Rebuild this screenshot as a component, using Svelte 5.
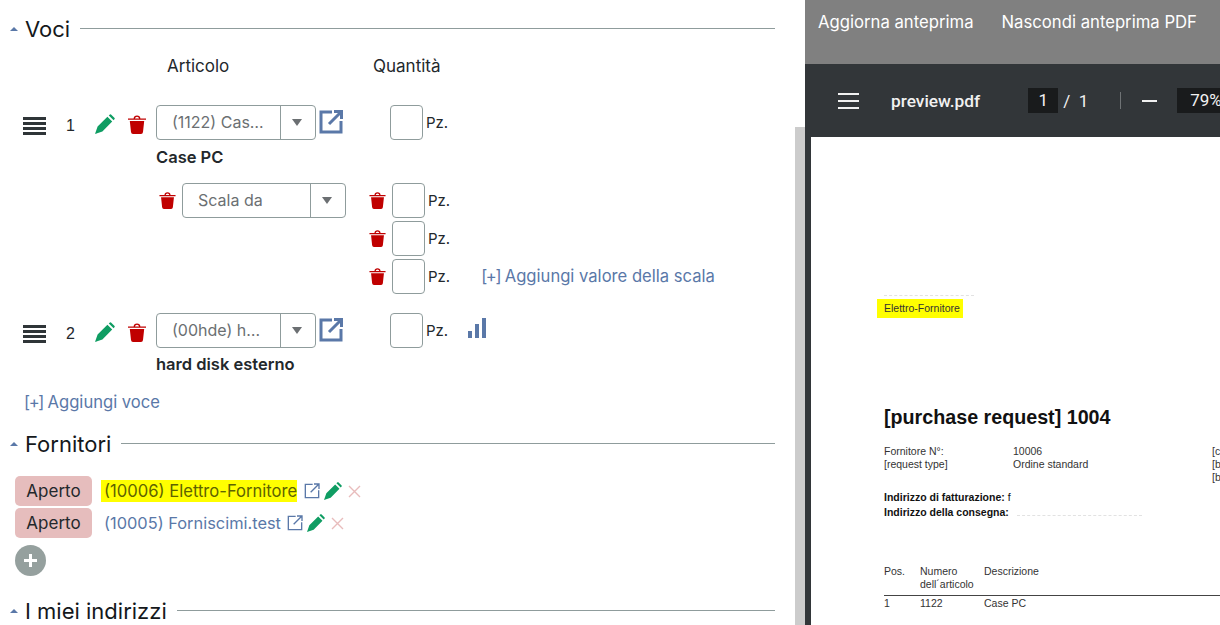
<script>
    //Scale values under the first article
    const scaleRows = [0, 1, 2];

    //Suppliers listed in the Fornitori section
    const suppliers = [
        { label: "(10006) Elettro-Fornitore", marked: true },
        { label: "(10005) Forniscimi.test", marked: false }
    ];
</script>

{#snippet pencil(size)}
    <svg class="pencil" width={size} height={size} viewBox="0 0 20 20">
        <path d="M0 20 L2.6 12.6 L12.4 2.8 L17.2 7.6 L7.4 17.4 Z M13.8 1.4 L14.9 .4 Q15.4 0 16 .4 L19.6 4 Q20 4.6 19.6 5.1 L18.6 6.2 Z" />
    </svg>
{/snippet}

{#snippet trash()}
    <svg class="trash" width="18" height="19" viewBox="0 0 18 19">
        <path d="M0 3.4 H18 V4.8 H0 Z M5.6 3.4 Q5.8 .4 9 .4 Q12.2 .4 12.4 3.4 H11 Q10.8 1.7 9 1.7 Q7.2 1.7 7 3.4 Z M1.8 6 H16.2 L15 17 Q14.8 19 13 19 H5 Q3.2 19 3 17 Z" />
    </svg>
{/snippet}

{#snippet external(size, weight)}
    <svg class="external" width={size} height={size} viewBox="0 0 24 24" stroke-width={weight}>
        <path d="M13 2 H2 V22 H22 V11 M15 1.5 H22.5 V9 M22 2 L10 14" />
    </svg>
{/snippet}

{#snippet caret()}
    <span class="caret"></span>
{/snippet}

{#snippet picker(text, wide)}
    <div class="picker" class:wide>
        <span class="picker-text">{text}</span>
        <span class="picker-arrow"></span>
    </div>
{/snippet}

{#snippet handle()}
    <div class="handle"><span></span><span></span><span></span><span></span></div>
{/snippet}

<div class="page">
    <main class="form">
        <div class="section-head first">
            {@render caret()}
            <h2>Voci</h2>
            <hr />
        </div>

        <div class="col-titles">
            <span class="col-article">Articolo</span>
            <span class="col-qty">Quantità</span>
        </div>

        <!--First article with its scale-->
        <div class="item item-one">
            {@render handle()}
            <span class="num">1</span>
            {@render pencil(20)}
            {@render trash()}
            {@render picker("(1122) Cas…", false)}
            {@render external(24, 3)}
            <input class="qty" aria-label="Quantità" />
            <span class="unit">Pz.</span>
        </div>
        <div class="item-name">Case PC</div>

        <div class="scale">
            <div class="scale-kind">
                {@render trash()}
                {@render picker("Scala da", true)}
            </div>
            <div class="scale-values">
                {#each scaleRows as row}
                    <div class="scale-row">
                        {@render trash()}
                        <input class="qty" aria-label="Valore" />
                        <span class="unit">Pz.</span>
                        {#if row == 2}
                            <a class="link add-scale" href="#top"><span class="plus">[+]</span> Aggiungi valore della scala</a>
                        {/if}
                    </div>
                {/each}
            </div>
        </div>

        <!--Second article-->
        <div class="item item-two">
            {@render handle()}
            <span class="num">2</span>
            {@render pencil(20)}
            {@render trash()}
            {@render picker("(00hde) h…", false)}
            {@render external(24, 3)}
            <input class="qty" aria-label="Quantità" />
            <span class="unit">Pz.</span>
            <div class="bars"><span></span><span></span><span></span></div>
        </div>
        <div class="item-name second">hard disk esterno</div>

        <a class="link add-item" href="#top"><span class="plus">[+]</span> Aggiungi voce</a>

        <div class="section-head">
            {@render caret()}
            <h2>Fornitori</h2>
            <hr />
        </div>

        <div class="suppliers">
            {#each suppliers as supplier}
                <div class="supplier">
                    <span class="badge">Aperto</span>
                    <a class="link supplier-name" class:marked={supplier.marked} href="#top">{supplier.label}</a>
                    {@render external(16, 2)}
                    {@render pencil(18)}
                    <svg class="remove" width="13" height="13" viewBox="0 0 13 13">
                        <path d="M1 1 L12 12 M12 1 L1 12" />
                    </svg>
                </div>
            {/each}
            <div class="add-supplier">
                <svg width="15" height="15" viewBox="0 0 15 15"><path d="M6 1 H9 V6 H14 V9 H9 V14 H6 V9 H1 V6 H6 Z" /></svg>
            </div>
        </div>

        <div class="section-head last">
            {@render caret()}
            <h2>I miei indirizzi</h2>
            <hr />
        </div>
    </main>

    <div class="scrollbar"></div>

    <aside class="preview">
        <div class="preview-actions">
            <span>Aggiorna anteprima</span>
            <span>Nascondi anteprima PDF</span>
        </div>

        <div class="viewer-bar">
            <div class="burger"><span></span><span></span><span></span></div>
            <span class="file-name">preview.pdf</span>
            <span class="page-box">1</span>
            <span class="page-total">/&nbsp;&nbsp;1</span>
            <span class="divider"></span>
            <span class="minus"></span>
            <span class="zoom-box">79%</span>
        </div>

        <div class="sheet-wrap">
            <div class="sheet">
                <div class="sheet-residue"></div>
                <div class="sheet-mark">Elettro-Fornitore</div>
                <h1>[purchase request] 1004</h1>

                <div class="doc-meta">
                    <span>Fornitore N°:</span><span>10006</span><span>[c</span>
                    <span>[request type]</span><span>Ordine standard</span><span>[b</span>
                    <span></span><span></span><span>[b</span>
                </div>

                <div class="doc-address">
                    <div><b>Indirizzo di fatturazione:</b> f</div>
                    <div class="delivery"><b>Indirizzo della consegna:</b><span class="sheet-residue inline"></span></div>
                </div>

                <div class="doc-table">
                    <div class="doc-head">
                        <span>Pos.</span>
                        <span>Numero<br />dell´articolo</span>
                        <span>Descrizione</span>
                    </div>
                    <div class="doc-row">
                        <span>1</span>
                        <span>1122</span>
                        <span>Case PC</span>
                    </div>
                </div>
            </div>
        </div>
    </aside>
</div>

<style>
    :global(body){
        margin: 0;
        overflow: hidden;
        background-color: #ffffff;
    }

    .page{
        display: flex;
        width: 1220px;
        height: 625px;
        overflow: hidden;
        font-family: "Inter", "Liberation Sans", sans-serif;
        font-size: 16px;
        color: #23282c;
    }

    /*Form column*/
    .form{
        width: 795px;
        flex: none;
        box-sizing: border-box;
        padding: 15px 20px 0px 10px;
    }

    .section-head{
        display: flex;
        align-items: center;
        height: 27px;
        margin-top: 17px;
    }

    .section-head.first{
        margin-top: 0px;
    }

    .section-head.last{
        margin-top: 21px;
    }

    .caret{
        width: 0;
        height: 0;
        margin-right: 7px;
        border-left: 4px solid transparent;
        border-right: 4px solid transparent;
        border-bottom: 4px solid #5a78a8;
    }

    h2{
        margin: 0px 10px 0px 0px;
        font-size: 22px;
        font-weight: 400;
        color: #14181b;
    }

    hr{
        flex: 1;
        margin: 0;
        border: none;
        border-top: 1px solid #8f9c9c;
    }

    .col-titles{
        display: flex;
        height: 20px;
        margin-top: 14px;
        font-size: 17px;
        line-height: 20px;
    }

    .col-article{
        width: 206px;
        margin-left: 157px;
    }

    .item{
        display: flex;
        align-items: center;
        height: 35px;
        padding-left: 13px;
    }

    .item-one{
        margin-top: 29px;
    }

    .item-two{
        margin-top: 18px;
    }

    .handle{
        display: flex;
        flex-direction: column;
        gap: 2px;
        width: 23px;
        margin-top: 6px;
    }

    .handle span{
        height: 3px;
        background-color: #2f3538;
    }

    .num{
        width: 33px;
        margin-top: 7px;
        margin-left: 20px;
        font-size: 16px;
        font-family: "Liberation Sans", sans-serif;
    }

    .pencil{
        flex: none;
        fill: #0f9d63;
    }

    .item .pencil{
        margin-left: -4px;
        margin-top: 3px;
    }

    .trash{
        flex: none;
        fill: #c00000;
    }

    .item .trash{
        margin-left: 13px;
        margin-top: 3px;
    }

    .scale .trash{
        width: 17px;
        height: 17px;
        margin-right: 1px;
    }

    .item .picker{
        margin-left: 10px;
    }

    .picker{
        display: flex;
        flex: none;
        box-sizing: border-box;
        width: 160px;
        height: 35px;
        border: 1px solid #8f9c9c;
        border-radius: 4px;
    }

    .picker.wide{
        width: 164px;
    }

    .picker-text{
        flex: 1;
        padding-left: 15px;
        line-height: 32px;
        color: #6b6f72;
    }

    .picker-arrow{
        position: relative;
        flex: none;
        width: 34px;
        border-left: 1px solid #8f9c9c;
    }

    .picker-arrow::after{
        content: "";
        position: absolute;
        top: 13px;
        left: 11px;
        border-left: 5.5px solid transparent;
        border-right: 5.5px solid transparent;
        border-top: 7px solid #6b6f72;
    }

    .external{
        flex: none;
        fill: none;
        stroke: #5a78a8;
    }

    .item .external{
        margin-left: 3px;
        margin-top: -1px;
    }

    .qty{
        flex: none;
        box-sizing: border-box;
        width: 33px;
        height: 35px;
        padding: 0;
        border: 1px solid #8f9c9c;
        border-radius: 4px;
        background-color: #ffffff;
    }

    .item .qty{
        margin-left: 47px;
    }

    .unit{
        margin-left: 3px;
        font-size: 15px;
    }

    .item-name{
        margin-top: 7px;
        margin-left: 146px;
        height: 20px;
        font-size: 16.5px;
        line-height: 20px;
        font-weight: 600;
    }

    .item-name.second{
        margin-top: 6px;
    }

    .scale{
        display: flex;
        margin-top: 16px;
        margin-left: 149px;
    }

    .scale-kind{
        display: flex;
        align-items: center;
        gap: 5px;
        height: 35px;
    }

    .scale-values{
        margin-left: 23px;
    }

    .scale-row{
        display: flex;
        align-items: center;
        gap: 5px;
        height: 37.5px;
    }

    .scale-row:first-child{
        height: 35px;
        margin-bottom: 2px;
    }

    .scale-row .unit{
        margin-left: -2px;
    }

    .link{
        color: #5a78a8;
        font-size: 16.6px;
        text-decoration: none;
    }

    .plus{
        letter-spacing: -1.4px;
    }

    .add-scale{
        margin-left: 26px;
    }

    .bars{
        display: flex;
        align-items: flex-end;
        gap: 3px;
        height: 20px;
        margin-left: 20px;
        margin-top: -5px;
    }

    .bars span{
        width: 4px;
        background-color: #5a78a8;
    }

    .bars span:nth-child(1){
        height: 7px;
    }

    .bars span:nth-child(2){
        height: 14px;
    }

    .bars span:nth-child(3){
        height: 20px;
    }

    .add-item{
        display: block;
        margin-top: 17px;
        margin-left: 14px;
        height: 22px;
        line-height: 22px;
    }

    /*Supplier rows*/
    .suppliers{
        display: flex;
        flex-direction: column;
        gap: 2px;
        margin-top: 19px;
        margin-left: 5px;
    }

    .supplier{
        display: flex;
        align-items: center;
        height: 30px;
    }

    .badge{
        box-sizing: border-box;
        width: 77px;
        height: 30px;
        border-radius: 5px;
        background-color: #e6bdbd;
        font-size: 17px;
        line-height: 30px;
        text-align: center;
    }

    .supplier-name{
        margin-left: 9px;
        margin-right: 6px;
        padding: 1px 0px 1px 3px;
        font-size: 16.4px;
        white-space: nowrap;
    }

    .supplier-name.marked{
        background-color: #ffff00;
        color: #5e6300;
        font-size: 16.6px;
        margin-right: 7px;
    }

    .supplier .pencil{
        margin-left: 4px;
    }

    .remove{
        margin-left: 6px;
        fill: none;
        stroke: #e8bcbc;
        stroke-width: 1.4;
    }

    .add-supplier{
        display: flex;
        align-items: center;
        justify-content: center;
        width: 31px;
        height: 31px;
        margin-top: 5px;
        border-radius: 50%;
        background-color: #95a09e;
    }

    .add-supplier path{
        fill: #ffffff;
    }

    .scrollbar{
        flex: none;
        width: 10px;
        margin-top: 127px;
        background-color: #cccccc;
    }

    /*PDF preview column*/
    .preview{
        display: flex;
        flex-direction: column;
        flex: none;
        width: 415px;
        overflow: hidden;
    }

    .preview-actions{
        display: flex;
        gap: 28px;
        flex: none;
        height: 64px;
        box-sizing: border-box;
        padding: 12px 0px 0px 13px;
        background-color: #808080;
        color: #ffffff;
        font-size: 16.7px;
        line-height: 20px;
        white-space: nowrap;
    }

    .viewer-bar{
        display: flex;
        align-items: center;
        flex: none;
        height: 73px;
        background-color: #323639;
        color: #f1f1f1;
        font-family: "Roboto", sans-serif;
        font-size: 17px;
        white-space: nowrap;
    }

    .viewer-bar > *{
        flex: none;
    }

    .burger{
        display: flex;
        flex-direction: column;
        gap: 5px;
        width: 21px;
        margin-left: 33px;
    }

    .burger span{
        height: 2px;
        background-color: #f1f1f1;
    }

    .file-name{
        margin-left: 32px;
        font-size: 17.3px;
        font-weight: 500;
    }

    .page-box{
        width: 30px;
        height: 25px;
        margin-left: 48px;
        background-color: #191b1c;
        line-height: 25px;
        text-align: center;
    }

    .page-total{
        margin-left: 5px;
    }

    .divider{
        width: 1px;
        height: 17px;
        margin-left: 32px;
        background-color: #6f7375;
    }

    .minus{
        width: 15px;
        height: 2px;
        margin-left: 21px;
        background-color: #f1f1f1;
    }

    .zoom-box{
        box-sizing: border-box;
        width: 60px;
        height: 25px;
        margin-left: 20px;
        padding-left: 13px;
        background-color: #191b1c;
        line-height: 25px;
    }

    .sheet-wrap{
        flex: 1;
        min-height: 0;
        overflow: hidden;
        padding-left: 6px;
        background-color: #323639;
    }

    .sheet{
        height: 100%;
        box-sizing: border-box;
        padding: 158px 0px 0px 73px;
        background-color: #ffffff;
        font-family: "Liberation Sans", sans-serif;
        font-size: 10.5px;
        line-height: 13px;
        color: #333333;
        white-space: nowrap;
    }

    /*Leftovers of blacked-out text in the PDF*/
    .sheet-residue{
        width: 90px;
        height: 0px;
        margin-bottom: 3px;
        border-top: 1px dashed #e2e2e2;
    }

    .sheet-residue.inline{
        display: inline-block;
        width: 125px;
        margin: 0px 0px 0px 8px;
    }

    .sheet-mark{
        width: fit-content;
        margin-left: -7px;
        padding: 3px 3px 3px 7px;
        background-color: #ffff00;
    }

    h1{
        margin: 88px 0px 0px 0px;
        font-size: 19.7px;
        line-height: 22px;
        color: #111111;
    }

    .doc-meta{
        display: grid;
        grid-template-columns: 129px 199px 20px;
        grid-auto-rows: 13px;
        margin-top: 17px;
    }

    .doc-address{
        margin-top: 6px;
        line-height: 15px;
        color: #111111;
    }

    .doc-table{
        margin-top: 45px;
    }

    .doc-head, .doc-row{
        display: grid;
        grid-template-columns: 36px 64px 1fr;
    }

    .doc-head{
        padding-bottom: 4px;
        border-bottom: 1px solid #444444;
    }

    .doc-row{
        padding-top: 1px;
    }
</style>
